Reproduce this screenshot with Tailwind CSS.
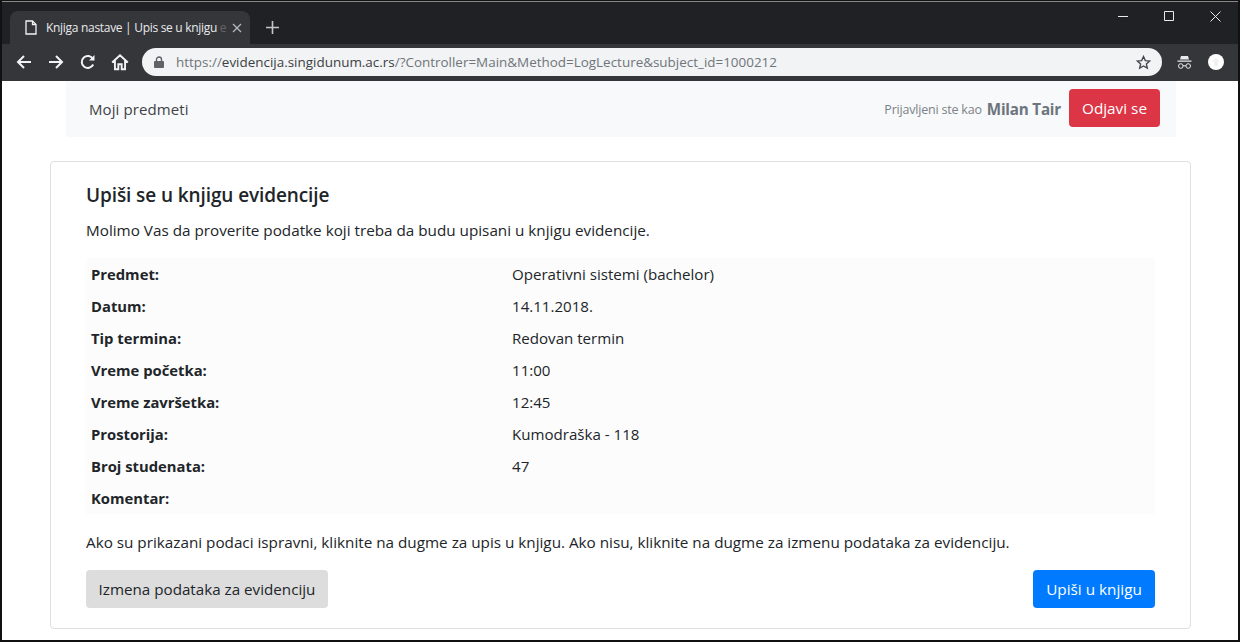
<!DOCTYPE html>
<html lang="sr">
<head>
  <meta charset="UTF-8">
  <meta name="viewport" content="width=device-width, initial-scale=1.0">
  <title>Knjiga nastave | Upis se u knjigu evidencije</title>
  <script src="https://cdn.jsdelivr.net/npm/@tailwindcss/browser@4"></script>
</head>
<body class="bg-white">
  <div class="w-[1240px] h-[642px] overflow-hidden flex flex-col border-x-2 border-b-2 border-t border-[#111] bg-white font-['Open_Sans',sans-serif] text-[#212529]">
    <!-- Title bar -->
    <div class="h-[43px] shrink-0 bg-[#202124] flex items-end border-t border-[#888] relative">
      <div class="ml-2 w-[240px] h-[33px] bg-[#35363a] rounded-t-lg flex items-center pl-[15px] pr-[10px]">
        <svg class="w-[12px] h-[15px] shrink-0" viewBox="0 0 12 15" fill="none" stroke="#f1f3f4" stroke-width="1.3"><path d="M1 1h6.500L11 4.500V14H1z"/><path d="M7.500 1v3.500H11"/></svg>
        <span class="ml-[9px] flex-1 whitespace-nowrap text-[12px] tracking-[-0.3px] text-[#e8eaed]">Knjiga nastave | Upis se u knjigu <span class="opacity-25">e</span></span>
        <svg class="w-[10px] h-[10px] ml-[6px] shrink-0" viewBox="0 0 10 10" stroke="#b5b8bc" stroke-width="1.3"><path d="M1 1l8 8M9 1l-8 8"/></svg>
      </div>
      <svg class="w-[13px] h-[13px] ml-[16px] mb-[10px]" viewBox="0 0 13 13" stroke="#c4c7ca" stroke-width="1.6"><path d="M6.500 0v13M0 6.500h13"/></svg>
      <div class="ml-auto flex items-center h-[28px] self-start mr-[17px]">
        <svg class="w-[10px] h-[10px] mr-[36px]" viewBox="0 0 10 10" stroke="#e8eaed" stroke-width="1"><path d="M0 5.500h10"/></svg>
        <svg class="w-[10px] h-[10px] mr-[36px]" viewBox="0 0 10 10" fill="none" stroke="#e8eaed" stroke-width="1"><path d="M.5.5h9v9h-9z"/></svg>
        <svg class="w-[11px] h-[11px]" viewBox="0 0 11 11" stroke="#e8eaed" stroke-width="1"><path d="M.5.5l10 10M10.500.5l-10 10"/></svg>
      </div>
    </div>
    <!-- Toolbar -->
    <div class="h-[37px] shrink-0 bg-[#35363a] flex items-center pl-[14px] pb-[1px]">
      <svg class="w-[16px] h-[16px]" viewBox="0 0 16 16" fill="none" stroke="#f1f3f4" stroke-width="2"><path d="M15 8H2M8 2L2 8l6 6"/></svg>
      <svg class="w-[16px] h-[16px] ml-[16px]" viewBox="0 0 16 16" fill="none" stroke="#f1f3f4" stroke-width="2"><path d="M1 8h13M8 2l6 6-6 6"/></svg>
      <svg class="w-[16px] h-[16px] ml-[16px]" viewBox="0 0 16 16" fill="none" stroke="#f1f3f4" stroke-width="2"><path d="M13.200 10.500A6 6 0 1 1 13 5"/><path d="M14.500 1v5.500H9z" stroke="none" fill="#f1f3f4"/></svg>
      <svg class="w-[18px] h-[18px] ml-[15px]" viewBox="0 0 16 16" fill="none" stroke="#f1f3f4" stroke-width="1.7"><path d="M1 8.500l7-6.500 7 6.500M3.500 6.500V14.500h3V10h3v4.500h3V6.500"/></svg>
      <div class="ml-[13px] w-[1020px] h-[28px] rounded-full bg-[#f1f3f4] flex items-center pl-[12px] pr-[11px]">
        <svg class="w-[10px] h-[12px]" viewBox="0 0 10 12"><path fill="#5f6368" d="M1 5h8a1 1 0 0 1 1 1v5a1 1 0 0 1-1 1H1a1 1 0 0 1-1-1V6a1 1 0 0 1 1-1z"/><path fill="none" stroke="#5f6368" stroke-width="1.400" d="M2.500 5V3.500a2.500 2.500 0 0 1 5 0V5"/></svg>
        <span class="ml-[12px] text-[13.450px] whitespace-nowrap text-[#70757a]">https://<span class="text-[#3c4043]">evidencija.singidunum.ac.rs</span>/?Controller=Main&amp;Method=LogLecture&amp;subject_id=1000212</span>
        <svg class="ml-auto w-[15px] h-[15px]" viewBox="0 0 24 24" fill="none" stroke="#44474a" stroke-width="2.200"><path d="M12 2.500l2.900 6.400 6.900.7-5.200 4.600 1.500 6.800-6.100-3.500-6.100 3.500 1.500-6.800-5.200-4.600 6.900-.7z"/></svg>
      </div>
      <svg class="w-[15px] h-[15px] ml-[15px]" viewBox="0 0 15 15" fill="none" stroke="#e8eaed"><path fill="#e8eaed" stroke="none" d="M4 1h7l1 3.500H3zM.5 5.500h14v1.200H.5z"/><circle cx="3.800" cy="11" r="2.300"/><circle cx="11.200" cy="11" r="2.300"/><path d="M6 10.800h3"/></svg>
      <div class="w-[16px] h-[16px] ml-[16px] rounded-full bg-white flex items-center justify-center">
        <svg class="w-[8px] h-[8px]" viewBox="0 0 8 8"><path fill="#f1f1f1" d="M4 0l4 4H6v4H2V4H0z"/></svg>
      </div>
    </div>
    <!-- Page -->
    <div class="flex-1 pl-[48px] pr-[47px]">
      <nav class="ml-[16px] mr-[15px] h-[56px] bg-[#f8f9fa] flex items-center pl-[23px] pr-[16px]">
        <a class="mt-[1px] text-[15px] text-[#3f4347] tracking-[0.1px]">Moji predmeti</a>
        <span class="ml-auto mt-[2px] text-[12.500px] tracking-[-0.2px] text-[#7b8288]">Prijavljeni ste kao</span>
        <strong class="ml-[5px] mt-[1px] text-[15.200px] font-bold tracking-[-0.2px] text-[#6c757d]">Milan Tair</strong>
        <button class="ml-[8px] mb-[2px] h-[38px] w-[91px] rounded bg-[#dc3545] text-white text-[15.300px]">Odjavi se</button>
      </nav>
      <main class="mt-[24px] h-[468px] border border-[#dfdfdf] rounded px-[35px] pt-[19px]">
        <h5 class="text-[19px] leading-[28px] font-semibold tracking-[-0.1px] text-[#212529]">Upiši se u knjigu evidencije</h5>
        <p class="mt-[9px] text-[15.250px] leading-[24px]">Molimo Vas da proverite podatke koji treba da budu upisani u knjigu evidencije.</p>
        <table class="mt-[16px] w-full bg-[#fcfcfc] text-[15.100px] border-collapse">
          <tbody>
            <tr class="h-[32px]"><th class="w-[426px] pl-[5px] text-left text-[14.800px] font-bold">Predmet:</th><td>Operativni sistemi (bachelor)</td></tr>
            <tr class="h-[32px]"><th class="pl-[5px] text-left text-[14.800px] font-bold">Datum:</th><td>14.11.2018.</td></tr>
            <tr class="h-[32px]"><th class="pl-[5px] text-left text-[14.800px] font-bold">Tip termina:</th><td>Redovan termin</td></tr>
            <tr class="h-[32px]"><th class="pl-[5px] text-left text-[14.800px] font-bold">Vreme početka:</th><td>11:00</td></tr>
            <tr class="h-[32px]"><th class="pl-[5px] text-left text-[14.800px] font-bold">Vreme završetka:</th><td>12:45</td></tr>
            <tr class="h-[32px]"><th class="pl-[5px] text-left text-[14.800px] font-bold">Prostorija:</th><td>Kumodraška - 118</td></tr>
            <tr class="h-[32px]"><th class="pl-[5px] text-left text-[14.800px] font-bold">Broj studenata:</th><td>47</td></tr>
            <tr class="h-[32px]"><th class="pl-[5px] text-left text-[14.800px] font-bold">Komentar:</th><td></td></tr>
          </tbody>
        </table>
        <p class="mt-[16px] text-[15.250px] leading-[24px]">Ako su prikazani podaci ispravni, kliknite na dugme za upis u knjigu. Ako nisu, kliknite na dugme za izmenu podataka za evidenciju.</p>
        <div class="mt-[16px] flex justify-between">
          <button class="h-[38px] w-[242px] rounded bg-[#dddddd] text-[15.200px] text-[#212529]">Izmena podataka za evidenciju</button>
          <button class="h-[38px] w-[122px] rounded bg-[#007bff] text-[15.300px] text-white">Upiši u knjigu</button>
        </div>
      </main>
    </div>
  </div>
</body>
</html>
